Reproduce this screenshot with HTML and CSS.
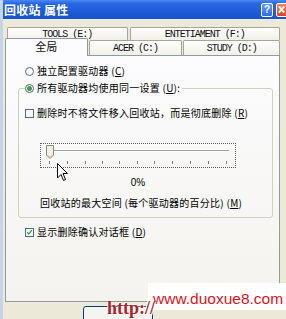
FILE: index.html
```html
<!DOCTYPE html>
<html>
<head>
<meta charset="utf-8">
<link rel="stylesheet" href="styles.css">
</head>
<body>
<div class="window">
  <div class="titlebar">
    <span class="title">回收站 属性</span>
    <div class="tbtns">
      <span class="tb help">?</span>
      <span class="tb close"><svg width="11" height="13" viewBox="0 0 11 13"><path d="M2 3 L8 10 M8 3 L2 10" stroke="#fff" stroke-width="2"/></svg></span>
    </div>
  </div>
  <div class="body">
    <div class="tabrow row1">
      <div class="tab t-tools">TOOLS (E:)</div>
      <div class="tab t-ent">ENTETIAMENT (F:)</div>
    </div>
    <div class="tabrow row2">
      <div class="tab sel">全局</div>
      <div class="tab t-acer">ACER (C:)</div>
      <div class="tab t-study">STUDY (D:)</div>
    </div>
    <div class="panel">
      <div class="opt first"><span class="radio"></span>独立配置驱动器 (<u>C</u>)</div>
      <fieldset class="group">
        <legend class="opt"><span class="radio on"></span>所有驱动器均使用同一设置 (<u>U</u>):</legend>
        <div class="opt chkrow"><span class="check"></span>删除时不将文件移入回收站，而是彻底删除 (<u>R</u>)</div>
        <div class="slider">
          <svg width="194" height="23" viewBox="0 0 194 23">
            <line x1="5" y1="6.5" x2="188" y2="6.5" stroke="#a3a293" stroke-width="1"/>
            <line x1="5" y1="7.5" x2="188" y2="7.5" stroke="#ffffff" stroke-width="1"/>
            <path d="M5.5 1.5 H12.5 V11 L9 14.5 L5.5 11 Z" fill="#f2f1e8" stroke="#8c8a78"/>
            <path d="M6.5 11 L9 13.5 L11.5 11" fill="none" stroke="#e8b060"/>
            <g stroke="#7e7e72">
              <line x1="8.5" y1="17" x2="8.5" y2="20"/>
              <line x1="26.5" y1="17" x2="26.5" y2="20"/>
              <line x1="44.5" y1="17" x2="44.5" y2="20"/>
              <line x1="61.5" y1="17" x2="61.5" y2="20"/>
              <line x1="78.5" y1="17" x2="78.5" y2="20"/>
              <line x1="96.5" y1="17" x2="96.5" y2="20"/>
              <line x1="113.5" y1="17" x2="113.5" y2="20"/>
              <line x1="131.5" y1="17" x2="131.5" y2="20"/>
              <line x1="149.5" y1="17" x2="149.5" y2="20"/>
              <line x1="167.5" y1="17" x2="167.5" y2="20"/>
              <line x1="185.5" y1="17" x2="185.5" y2="20"/>
            </g>
          </svg>
        </div>
        <div class="pct">0%</div>
        <div class="caption">回收站的最大空间 (每个驱动器的百分比) (<u>M</u>)</div>
      </fieldset>
      <div class="opt chk2"><span class="check on"><svg width="9" height="9" viewBox="0 0 9 9"><path d="M1.5 4 L3.5 6.5 L7.5 1.5" fill="none" stroke="#21a121" stroke-width="1.6"/></svg></span>显示删除确认对话框 (<u>D</u>)</div>
    </div>
    <div class="btnrow"><div class="btn"></div></div>
  </div>
  <svg class="cursor" width="12" height="19" viewBox="0 0 12 19"><path d="M0.5 0.5 V15 L4 11.5 L6.5 17.5 L8.5 16.5 L6 10.5 L10.5 10.5 Z" fill="#fff" stroke="#000" stroke-width="1"/></svg>
  <div class="wm-box">www.duoxue8.com</div>
  <div class="wm-http">http://</div>
</div>
</body>
</html>
```
FILE: styles.css
```css
* { box-sizing: border-box; }
html, body { margin: 0; padding: 0; }
body {
  width: 286px;
  height: 319px;
  overflow: hidden;
  background: #ece9d8;
  font-family: "Noto Sans CJK SC", "Noto Sans", sans-serif;
  font-size: 10px;
  color: #000;
}
.window {
  position: relative;
  width: 286px;
  height: 319px;
  border-left: 3px solid #c5d4ea;
  overflow: hidden;
}
.titlebar {
  height: 20px;
  display: flex;
  align-items: center;
  justify-content: space-between;
  background: linear-gradient(to bottom, #4a8af0 0%, #2866e2 18%, #1e5bd8 60%, #1a52c8 95%, #e8eef8 95%);
  margin-left: -3px;
  padding-left: 4px;
}
.title {
  color: #fff;
  font-weight: bold;
  font-size: 12px;
  line-height: 14px;
  letter-spacing: 0.3px;
  margin-top: -1px;
}
.tbtns { display: flex; gap: 2px; align-items: center; margin-top: -1px; }
.tb {
  width: 12px;
  height: 14px;
  border: 1px solid #fff;
  border-radius: 2px;
  display: flex;
  align-items: center;
  justify-content: center;
  color: #fff;
  font-family: "Liberation Sans", sans-serif;
  font-weight: bold;
  font-size: 10px;
}
.help { background: linear-gradient(#6a9cf4, #2f6ae0); margin-right: 1px; }
.close { background: linear-gradient(#ee8a5e, #d4452a); width: 12px; margin-right: -2px; }
.body { padding: 7px 6px 0 2px; }
.tabrow { display: flex; }
.row1 { height: 13px; padding-left: 2px; gap: 2px; }
.row2 { height: 15px; align-items: flex-end; gap: 1px; }
.tab {
  font-family: "Liberation Mono", monospace;
  font-size: 10px;
  letter-spacing: -1px;
  color: #111;
  display: flex;
  align-items: center;
  justify-content: center;
  border: 1px solid #a7a694;
  border-bottom: none;
  border-radius: 2px 2px 0 0;
  background: linear-gradient(#fefefe, #f1f0ea);
}
.row1 .tab { height: 13px; }
.t-tools { width: 121px; }
.t-ent { width: 151px; }
.sel {
  width: 83px;
  height: 18px;
  margin-bottom: -1px;
  position: relative;
  z-index: 1;
  background: #fcfcfe;
  border-color: #919b9c;
  font-family: "Noto Sans CJK SC", sans-serif;
  font-size: 11px;
  letter-spacing: 0;
  align-items: flex-start;
  padding-top: 1px;
  line-height: 13px;
}
.row2 .t-acer { width: 94px; height: 15px; }
.row2 .t-study { width: 97px; height: 15px; }
.panel {
  height: 247px;
  border: 1px solid #919b9c;
  background: linear-gradient(#fcfcfe, #f4f3ee);
  display: flex;
  flex-direction: column;
  align-items: flex-start;
}
.opt {
  display: flex;
  align-items: center;
  height: 14px;
  line-height: 14px;
  white-space: nowrap;
  letter-spacing: 0.25px;
}
.opt u { text-decoration: underline; }
.first { margin: 8px 0 0 19px; }
.radio {
  width: 9px;
  height: 9px;
  border: 1px solid #4a6a9a;
  border-radius: 50%;
  background: #fbfbf8;
  margin-right: 3px;
  flex: none;
  display: flex;
  align-items: center;
  justify-content: center;
}
.radio.on::after {
  content: "";
  width: 5px;
  height: 5px;
  border-radius: 50%;
  background: #3ea33e;
}
.group {
  margin: 3px 0 0 12px;
  width: 255px;
  padding: 0 0 8px 0;
  border: 1px solid #d0d0bf;
  border-radius: 3px;
}
.group legend {
  padding: 0 2px 0 0;
  margin-left: 6px;
}
.chkrow { margin: 11px 0 0 6px; }
.check {
  width: 9px;
  height: 9px;
  border: 1px solid #4a6a9a;
  background: #f8f8f4;
  margin-right: 3px;
  flex: none;
  display: flex;
  align-items: center;
  justify-content: center;
}
.check svg { display: block; }
.slider {
  margin: 23px 0 0 21px;
  width: 196px;
  height: 25px;
  border: 1px dotted #5a5a5a;
}
.slider svg { display: block; }
.pct {
  margin: 9px 0 0 21px;
  width: 196px;
  text-align: center;
  font-family: "Liberation Sans", sans-serif;
  font-size: 10px;
  line-height: 12px;
}
.caption {
  margin: 8px 0 0 21px;
  line-height: 12px;
  white-space: nowrap;
  letter-spacing: 0.25px;
}
.chk2 { margin: 7px 0 0 19px; }
.btnrow { padding: 4px 0 0 78px; }
.btn {
  width: 70px;
  height: 20px;
  border: 1px solid #003c74;
  border-radius: 3px;
  background: #f4f4f0;
}
.cursor { position: absolute; left: 54px; top: 163px; }
.wm-box {
  position: absolute;
  left: 145px;
  top: 283px;
  width: 141px;
  height: 27px;
  background: #fff;
  color: #d8141c;
  font-family: "Liberation Sans", sans-serif;
  font-size: 15.5px;
  line-height: 16px;
  padding: 8px 0 0 5px;
}
.wm-http {
  position: absolute;
  left: 104px;
  top: 298px;
  color: #a8232a;
  font-family: "Liberation Serif", serif;
  font-weight: bold;
  font-size: 18px;
  line-height: 20px;
  text-shadow: 1px 1px 0 #fff, -1px -1px 0 #fff;
}
```
